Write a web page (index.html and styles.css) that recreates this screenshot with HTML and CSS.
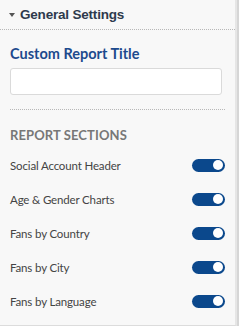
FILE: index.html
```html
<!DOCTYPE html>
<html>
<head>
<meta charset="utf-8">
<link rel="stylesheet" href="styles.css">
</head>
<body>
<div class="panel">
  <div class="header">
    <span class="caret"></span>
    <span class="header-title">General Settings</span>
  </div>
  <div class="content">
    <div class="field">
      <label class="field-label">Custom Report Title</label>
      <input class="text-input" type="text">
    </div>
    <div class="sections">
      <div class="sections-title">REPORT SECTIONS</div>
      <div class="row"><span class="row-label">Social Account Header</span><span class="toggle"><span class="knob"></span></span></div>
      <div class="row"><span class="row-label">Age &amp; Gender Charts</span><span class="toggle"><span class="knob"></span></span></div>
      <div class="row"><span class="row-label">Fans by Country</span><span class="toggle"><span class="knob"></span></span></div>
      <div class="row"><span class="row-label">Fans by City</span><span class="toggle"><span class="knob"></span></span></div>
      <div class="row"><span class="row-label">Fans by Language</span><span class="toggle"><span class="knob"></span></span></div>
    </div>
  </div>
</div>
</body>
</html>
```
FILE: styles.css
```css
html, body {
  margin: 0;
  padding: 0;
  background: #ffffff;
}
.panel {
  width: 235px;
  height: 325px;
  background: #f8f8f8;
  border-right: 2px solid #e6e6e6;
  box-shadow: 2px 0 0 #d6d6d6;
  border-bottom: 1px solid #dcdcdc;
  overflow: hidden;
  font-family: "Lato", "Open Sans", sans-serif;
}
.header {
  display: flex;
  align-items: center;
  padding-left: 9px;
  border-bottom: 1px dotted #b8b8b8;
  box-sizing: border-box;
  height: 30px;
}
.caret {
  width: 0;
  height: 0;
  border-left: 3.5px solid transparent;
  border-right: 3.5px solid transparent;
  border-top: 4px solid #555;
  margin-right: 5px;
  margin-top: 1px;
}
.header-title {
  font-family: "Liberation Sans", Arial, sans-serif;
  font-weight: bold;
  font-size: 13.5px;
  letter-spacing: -0.2px;
  color: #2e3a4c;
}
.content {
  padding: 0 10px;
}
.field {
  padding-top: 14px;
  padding-bottom: 14px;
  border-bottom: 1px dotted #b8b8b8;
}
.field-label {
  display: block;
  font-weight: 700;
  font-size: 14.5px;
  line-height: 19px;
  color: #1d4a8d;
  margin-bottom: 5px;
}
.text-input {
  display: block;
  width: 212px;
  height: 27px;
  box-sizing: border-box;
  border: 1px solid #dadada;
  border-radius: 3px;
  background: #fff;
  margin: 0;
}
.sections {
  padding-top: 16px;
}
.sections-title {
  font-weight: 700;
  font-size: 13px;
  line-height: 18px;
  letter-spacing: 0.1px;
  color: #777;
  margin-bottom: 4px;
}
.row {
  height: 34px;
  display: flex;
  align-items: center;
  justify-content: space-between;
}
.row-label {
  font-size: 11.5px;
  letter-spacing: -0.15px;
  color: #444;
}
.toggle {
  width: 33px;
  height: 13px;
  border-radius: 7px;
  background: #0b488c;
  display: flex;
  align-items: center;
  justify-content: flex-end;
  padding-right: 2px;
  box-sizing: border-box;
}
.knob {
  width: 10px;
  height: 10px;
  border-radius: 50%;
  background: #fff;
}
```
